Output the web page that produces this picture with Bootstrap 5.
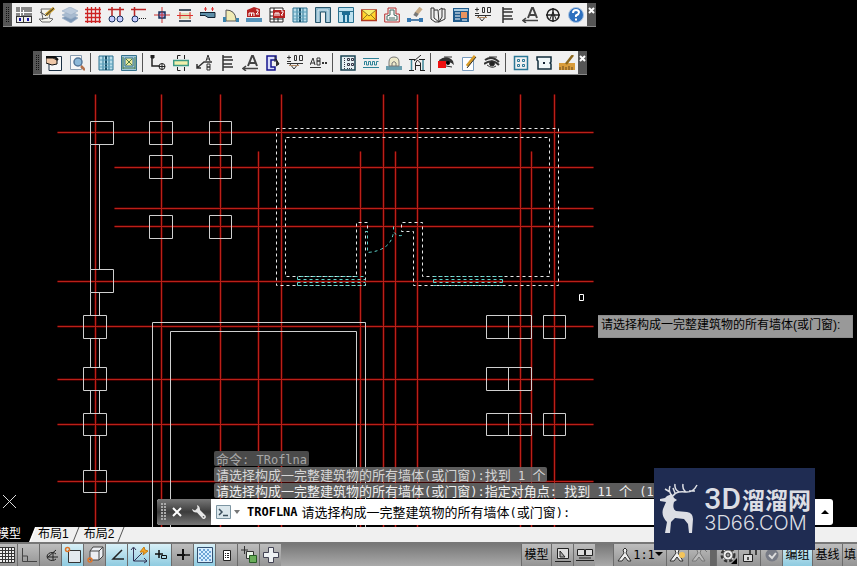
<!DOCTYPE html>
<html lang="zh-CN">
<head>
<meta charset="utf-8">
<meta name="viewport" content="width=device-width, initial-scale=1">
<title>CAD</title>
<link href="https://cdn.jsdelivr.net/npm/bootstrap@5.3.0/dist/css/bootstrap.min.css" rel="stylesheet">
<style>
body{background:#000;font-family:"Liberation Sans","Noto Sans CJK SC",sans-serif;font-size:12px;line-height:16px;color:#000}
button{border:0;padding:0;background:none;color:inherit;font:inherit}
svg{display:block;flex:none}
.plan{position:absolute;left:0;top:0}
.toolstrip{position:absolute;height:24px;background:#f0f0f0;border-bottom:1px solid #8a8a8a;overflow:hidden}
.strip-a{left:3px;top:3px}
.strip-b{left:33px;top:51px}
.strip-grip{width:9px;background:#555;color:#111}
.tool{width:23px;display:flex;align-items:center;justify-content:center}
.strip-sep{width:1px;background:#555;margin:2px 3px 2px 2px}
.strip-close{width:9px;background:#555;color:#fff}
.hint{position:absolute;left:598px;top:315px;background:#999;padding:1px 12px 4px 3px;border:1px solid #8c8c8c;border-left:0}
.history{position:absolute;left:214px;bottom:29px;font:13px/15px "Noto Sans CJK SC",sans-serif;gap:1px;color:#eee}
.history div{height:15px;background:rgba(105,105,105,.88);padding:0 2px;border-radius:2px;white-space:pre}
.history .past{background:#4a4a4a;color:#a6a6a6}
.history .recent{color:#d6d6d6}
.mono{font-family:"DejaVu Sans Mono",monospace;font-size:12px;line-height:12px}
.cmd{position:absolute;left:157px;right:24px;bottom:2px;height:26px;background:#fff;border-radius:3px;overflow:hidden;font:13px/18px "Noto Sans CJK SC",sans-serif}
.cmd-tools{width:54px;background:linear-gradient(#777,#3c3c3c 50%,#777)}
.cmd-name{font-weight:700}
.stage{z-index:1}
.brand{position:absolute;left:654px;bottom:-23px;width:161px;height:82px;background:#1f2c52;color:#dcdee4;padding:0 4px 0 6px}
.brand-cn{font:700 23px/28px "Noto Sans CJK SC",sans-serif;gap:1px}
.brand-num{font:500 30px/28px Roboto,sans-serif}
.brand-en{font:300 20px/20px Inter,"DejaVu Sans",sans-serif}
.sheets{height:17px;background:#f0f0f0;border-bottom:2px solid #777}
.sheets button{font-size:12px;line-height:15px}
.sheet-on{background:#000;color:#fff;width:28px;text-align:left}
.sheet-on span{margin-left:-3px}
.sheet{padding:0 2px}
.status{height:22px;background:linear-gradient(#777,#aaa);overflow:hidden}
.st{min-width:22px;border-left:1px solid #6c6c6c;background:linear-gradient(#bdbdbd,#949494);display:flex;align-items:center;justify-content:center;white-space:nowrap}
.st-on{background:linear-gradient(#d8f0f7,#8fcbe0)}
.st-word{width:30px}
.st-last{min-width:15px}
.st-scale{width:53px}
.left-group{margin-left:-5px}
.st-gap{width:18px}
.st-slit{width:6px;background:#666}
</style>
<script src="https://cdn.jsdelivr.net/npm/bootstrap@5.3.0/dist/js/bootstrap.bundle.min.js"></script>
</head>
<body class="d-flex flex-column vh-100 overflow-hidden">
<main class="stage flex-grow-1 position-relative">
<div class="position-absolute top-0 start-0 w-100 h-100 overflow-hidden">
<svg class="plan" width="857" height="527" fill="none" aria-label="建筑平面图">
<defs><path id="axes" d="M95 94V527M161 94V527M220 94V527M258 151V527M281 94V527M360 151V527M383 94V527M395 151V527M417 94V527M520 94V527M531 151V527M554 94V527M57 132H593M114 167H593M114 208H593M114 226H593M57 281H593M57 326H593M57 379H593M57 424H593M57 481H593"/></defs>
<g transform="translate(.5 .5)">
<use href="#axes" stroke="#3a0000" stroke-width="3"/>
<use href="#axes" stroke="#bb2018"/>
</g>
<g stroke="#cfcfcf" transform="translate(.5 .5)">
<path d="M90 121h23v23h-23zM149 121h23v23h-23zM209 121h22v23h-22zM149 155h23v23h-23zM209 155h22v23h-22zM149 215h23v23h-23zM209 215h22v23h-22zM90 269h23v23h-23z"/>
<path d="M83 315h23v23h-23zM83 367h23v23h-23zM83 413h23v22h-23zM83 470h23v22h-23z"/>
<path d="M90 144V269M99 144V269M90 292V315M99 292V315M90 338V367M99 338V367M90 390V413M99 390V413M90 435V470M99 435V470"/>
<path d="M152 527V322H365V527M170 527V331H356V527"/>
<path d="M486 315h45v23h-45zM508 315v23M486 367h45v23h-45zM508 367v23M486 413h45v22h-45zM508 413v22M543 315h22v23h-22zM543 413h22v22h-22z"/>
<path stroke="#fff" d="M579 294h4v6h-4z"/>
</g>
<g stroke="#e8e8e8" stroke-dasharray="3 3" transform="translate(.5 .5)">
<path d="M276 128H558V285H413V231H401V222H422V276H549V137H285V276H356V222H367V231H365V285H276V128"/>
</g>
<g stroke="#5fd4cc" stroke-dasharray="3 3" transform="translate(.5 .5)">
<path d="M297 285V276H365M297 279H365M297 282H365M297 285H365M433 276H502V285H433zM433 279H502M433 282H502"/>
<path d="M365 231H367V252Q391 250 393 231M393 226V231Q396 236 401 235V231"/>
</g>
<path stroke="#ddd" d="M3 495l13 13M16 495l-13 13"/>
</svg>
</div>

<div class="toolstrip strip-a d-flex" role="toolbar" aria-label="工具栏 1">
<div class="strip-grip"><svg width="9" height="24" stroke="#111" stroke-dasharray="1 1"><path d="M3.500 4V20M5.500 4V20"/></svg></div>
<button class="tool" aria-label="参数"><svg width="16" height="16" shape-rendering="crispEdges"><path fill="#888" d="M0 0h16v9H0z"/><path stroke="#fff" d="M0 5.500h16M4.500 0v9M7.500 3v5"/><path fill="#eee" stroke="#333" d="M.5 9.500h7v6h-7zM7.500 9.500h8v6h-8z"/><path fill="#11a" d="M3 11h2v3H3zM11 11h2v3h-2z"/></svg></button>
<button class="tool" aria-label="编辑"><svg width="16" height="16"><path fill="#f5f5ee" stroke="#666" d="M2 2h10l-2 9 4 1-3 3H3l-3-3h4z"/><path stroke="#555" d="M1 5l5 3M3 12l6-1"/><path stroke="#c69a25" stroke-width="3" d="M15 1L7 8"/><path stroke="#333" d="M15 1L6 9"/></svg></button>
<button class="tool" aria-label="图层"><svg width="16" height="16" stroke="#9db0c6" stroke-width=".7"><path fill="#7f9ab8" d="M0 11l8-4 8 4-7 5z"/><path fill="#a8bbd0" d="M0 8l8-4 8 4-7 4z"/><path fill="#bccbdc" d="M0 4l8-4 8 4-7 4z"/></svg></button>
<button class="tool" aria-label="轴网"><svg width="16" height="16" stroke="#c22" stroke-width="1.300"><path d="M0 2.500h16M0 6.500h16M0 10.500h16M0 14.500h16M2.500 0v16M6.500 0v16M10.500 0v16M14.500 0v16"/></svg></button>
<button class="tool" aria-label="两点轴标"><svg width="16" height="16" fill="#c6ccff"><path stroke="#b22" stroke-width="1.500" d="M0 2.500h16M4 0v9M12 0v9"/><g stroke="#17305c"><circle cx="4" cy="12" r="3"/><circle cx="12" cy="12" r="3"/></g></svg></button>
<button class="tool" aria-label="逐点轴标"><svg width="16" height="16" fill="#c6ccff"><path stroke="#b22" stroke-width="1.500" d="M0 2.500h15M3.500 0v9"/><circle cx="4" cy="12" r="3" stroke="#17305c"/><path stroke="#222" stroke-dasharray="1 1" d="M8 11.500h8"/></svg></button>
<button class="tool" aria-label="标准柱"><svg width="16" height="16"><path stroke="#c33" d="M0 8h16M8 0v16"/><path fill="#9da4e4" stroke="#17305c" stroke-width="1.500" d="M5 5h6v6H5z"/><path stroke="#c33" d="M5 8h6M8 5v6"/></svg></button>
<button class="tool" aria-label="墙体"><svg width="16" height="16"><path fill="#e3dfb8" d="M2 6h12v6H2z"/><path stroke="#123" stroke-width="1.500" d="M2 3h12M2 14h12"/><path stroke="#d33" d="M0 8.500h16M3 5v7M13 5v7"/></svg></button>
<button class="tool" aria-label="墙齐"><svg width="16" height="16"><path fill="#5e8fa8" stroke="#123" d="M0 5.500h15v5H8l-3-2H0z"/><path stroke="#d33" d="M5.500 0v4M12.500 0v4M4 2h3M11 2h3"/></svg></button>
<button class="tool" aria-label="门窗"><svg width="16" height="16"><path fill="#f0ebb4" stroke="#555" d="M3 14V3q9 0 10 9v2z"/><path fill="#3b84ad" d="M0 10h3v5H0zM13 11h3v4h-3z"/></svg></button>
<button class="tool" aria-label="面积"><svg width="16" height="16"><path fill="#b52222" d="M1 3l7-3 6 2v8H1z"/><path stroke="#fff" fill="none" d="M3 9V6h5v3M5.500 6v3M10 3h2v2l-2 2h3"/><path fill="#5793ba" d="M0 11h16v4H0z"/></svg></button>
<button class="tool" aria-label="面积表"><svg width="16" height="16"><path fill="#fff" stroke="#222" d="M1 1h13v14H1zM5 1v14M9 8v7M1 5h13M1 9h13M1 12h13"/><path fill="#b52222" d="M4 3h12v8H4z"/><path stroke="#fff" fill="none" d="M6 9V6h4v3M8 6v3M12 4h2v2l-2 2h2"/></svg></button>
<button class="tool" aria-label="门窗组"><svg width="16" height="16"><path fill="#b8ddea" stroke="#2a718f" d="M1 1h14v14H1zM5 1v14M11 1v14"/><path stroke="#174d66" stroke-width="2" d="M8 1v14"/><path stroke="#5ba0bb" d="M1 5h14M1 9h14M1 12h14"/></svg></button>
<button class="tool" aria-label="梯段"><svg width="16" height="16" fill="none"><path fill="#8cb7cc" stroke="#28566c" d="M.5 15.500V.5h15v15h-5V5h-5v10.500z"/><path stroke="#d8e9f0" d="M3 3v12M13 3v12M3 3h10"/></svg></button>
<button class="tool" aria-label="电梯"><svg width="16" height="16"><path fill="#bde1ef" stroke="#2a718f" d="M.5.500h15v15H.5zM.5 4.500h15"/><path fill="#1d6d94" d="M4 5h8v3h-1v7H9V8H7v7H5V8H4z"/></svg></button>
<button class="tool" aria-label="房间"><svg width="16" height="16"><path fill="#ffd72e" stroke="#b33b22" stroke-width="1.500" d="M.7 3h14.600v10.500H.7z"/><path fill="#f6ef70" stroke="#947422" d="M1 3l7 6 7-6M1 13l5-5M15 13l-5-5"/></svg></button>
<button class="tool" aria-label="洁具"><svg width="16" height="16"><path fill="#eee" stroke="#b33" d="M.7 7H4V1h8v6h3.300v8H.7z"/><path fill="#f8f8f8" stroke="#456b62" d="M3 13V9l3-1V3h4v5l3 1v4zM5 11h6"/></svg></button>
<button class="tool" aria-label="擦除"><svg width="16" height="16"><path stroke="#1f5d95" stroke-width="1.500" d="M0 13h16"/><path fill="#3779b2" d="M0 11h4v4H0zM12 11h4v4h-4z"/><path stroke="#c8ac88" stroke-width="4" d="M14 1L9 7"/><path stroke="#777" stroke-width="4" d="M10 6L8 9"/></svg></button>
<button class="tool" aria-label="图集"><svg width="16" height="16" fill="#eee" stroke="#333"><path d="M1 1h3v10l5 4H5l-4-3zM4 3h4l1 12M9 3l3-2v9l-3 5M12 2h3v10l-6 3"/></svg></button>
<button class="tool" aria-label="图块"><svg width="16" height="16"><path fill="#205b8c" d="M0 1h16v14H0z"/><path stroke="#fff" d="M2 6h5M2 9h5M2 12h5M9 13h5"/><path fill="#e8935f" d="M8 5h6v6H8z"/><path fill="#a9cde2" d="M1 2h14v2H1z"/></svg></button>
<button class="tool" aria-label="标高"><svg width="17" height="16" fill="none" stroke="#333"><path d="M0 2.500h4M2 .5v4M0 6.500h4M7.500.500h2v5h-2zM12.500.500h3v5h-3zM0 8.500h16M3 9l4 5 4-5"/><path stroke="#b28b66" d="M2 10.500h10"/></svg></button>
<button class="tool" aria-label="引注"><svg width="16" height="16" stroke="#333" stroke-width="1.500"><path d="M4 0v16M4 2h9M4 5h10M4 9h9M4 12h10"/></svg></button>
<button class="tool" aria-label="箭头"><svg width="16" height="16" fill="none" stroke="#444"><path stroke-width="2" d="M6 11L10 1h1l4 10M8 8h6"/><path stroke-width="1.500" d="M16 13.500H1M4 11l-3 2.500L4 16"/></svg></button>
<button class="tool" aria-label="指北针"><svg width="16" height="16" fill="none" stroke="#222"><circle cx="8" cy="8" r="6" stroke-width="1.500"/><path stroke-width="1.500" d="M1 8h14M8 1v14"/><path d="M5 12l3-7 3 7"/></svg></button>
<button class="tool" aria-label="帮助"><svg width="16" height="16"><circle cx="8" cy="8" r="7.500" fill="#2d70bf" stroke="#adc6e2"/><path fill="none" stroke="#fff" stroke-width="2" d="M5 6q0-3 3-3t3 2.500q0 1.500-3 3V10M8 11.500v2"/></svg></button>
<button class="strip-close d-flex justify-content-center" aria-label="关闭"><svg width="7" height="12" stroke="#fff" stroke-width="2"><path d="M1 5l5 5M6 5l-5 5"/></svg></button>
</div>

<div class="toolstrip strip-b d-flex" role="toolbar" aria-label="工具栏 2">
<div class="strip-grip"><svg width="9" height="24" stroke="#111" stroke-dasharray="1 1"><path d="M3.500 4V20M5.500 4V20"/></svg></div>
<button class="tool" aria-label="属性"><svg width="16" height="16"><path fill="#f8f8f8" stroke="#1c3144" d="M3 1.500h12.500v14H3z"/><path fill="#f0c8a8" stroke="#111" d="M0 3h7l4 2v4l-5 1-6-2z"/><path stroke="#111" stroke-width="2" fill="none" d="M0 2h9l3 3"/></svg></button>
<button class="tool" aria-label="查找"><svg width="16" height="16"><path fill="#f8f8f8" stroke="#8a9db0" d="M1.500.500h11v14h-11z"/><circle cx="9" cy="7" r="4" fill="#8db9d9" stroke="#55779a" stroke-width="1.500"/><path stroke="#b5704a" stroke-width="2.500" d="M12 11l4 4"/></svg></button>
<div class="strip-sep"></div>
<button class="tool" aria-label="门窗组"><svg width="16" height="16"><path fill="#b8ddea" stroke="#2a718f" d="M1 1h14v14H1zM5 1v14M11 1v14"/><path stroke="#174d66" stroke-width="2" d="M8 1v14"/><path stroke="#5ba0bb" d="M1 5h14M1 9h14M1 12h14"/></svg></button>
<button class="tool" aria-label="图框"><svg width="16" height="16"><path fill="#9fc7da" stroke="#35718c" d="M.5.500h15v15H.5z"/><path fill="#ece99a" stroke="#35718c" d="M4 3h8v8H4z"/><path stroke="#4b7b48" d="M5 4l6 6M11 4l-6 6M2 13h12M2 2v12M14 2v12"/></svg></button>
<div class="strip-sep"></div>
<button class="tool" aria-label="轴改"><svg width="16" height="16" fill="none" stroke="#222"><path stroke-width="1.500" d="M2 1v10h7"/><circle cx="12" cy="11.500" r="3"/><path d="M9 11.500h6M12 8.500v6"/><path fill="#222" d="M1 0h3v3H1z"/></svg></button>
<button class="tool" aria-label="剖切"><svg width="16" height="16"><path fill="#f1efab" stroke="#3d9a86" stroke-width="1.500" d="M.7 5.500h14.600v5H.7z"/><path stroke="#222" fill="none" d="M4.500 4V.5h3M11.500 0v4M4.500 12v3.500h3M11.500 12v4"/></svg></button>
<button class="tool" aria-label="索引"><svg width="16" height="16" fill="none" stroke="#333"><path stroke-width="1.500" d="M1 13l7-6h8M1 9v4h4"/><path d="M10 6l2-6 2 6M11 4h3M11 9h3v3h-3zM11 12h3v3h-3z"/></svg></button>
<button class="tool" aria-label="引注"><svg width="16" height="16" stroke="#333" stroke-width="1.500"><path d="M4 0v16M4 2h9M4 5h10M4 9h9M4 12h10"/></svg></button>
<button class="tool" aria-label="箭头"><svg width="16" height="16" fill="none" stroke="#444"><path stroke-width="2" d="M6 11L10 1h1l4 10M8 8h6"/><path stroke-width="1.500" d="M16 13.500H1M4 11l-3 2.500L4 16"/></svg></button>
<button class="tool" aria-label="轮廓"><svg width="16" height="16" fill="#d9ddfa" stroke="#15158d"><path stroke-width="1.500" d="M11 1H2v14h8v-3H6V5h5z"/><path fill="#333" stroke="#222" d="M11 4l3 5-3 2M10 1v6"/></svg></button>
<button class="tool" aria-label="标高"><svg width="17" height="16" fill="none" stroke="#333"><path d="M0 2.500h4M2 .5v4M0 6.500h4M7.500.500h2v5h-2zM12.500.500h3v5h-3zM0 8.500h16M3 9l4 5 4-5"/><path stroke="#b28b66" d="M2 10.500h10"/></svg></button>
<button class="tool" aria-label="文字"><svg width="17" height="16" fill="none" stroke="#333"><path d="M0 10l3-7 2 7M1 8h4M7 3h3v3H7zM7 6h3v4H7zM0 12.500h11"/><path stroke-width="2" d="M12 8h2M15 8h2"/></svg></button>
<div class="strip-sep"></div>
<button class="tool" aria-label="总图"><svg width="16" height="16"><path fill="#e6f0f3" stroke="#1a4353" stroke-width="1.500" d="M1 1h14v14H1z"/><path fill="none" stroke="#334" d="M7.500 3.500h2v2h-2zM11.500 3.500h2v2h-2zM7.500 8.500h2v2h-2zM11.500 8.500h2v2h-2z"/><path stroke="#334" stroke-dasharray="1 1" d="M4.500 3v11M7 13.500h6"/></svg></button>
<button class="tool" aria-label="保温"><svg width="16" height="16" fill="none" stroke="#2f8297"><path d="M0 3.500h16M0 12.500h16"/><path d="M1.500 10V6.500h2V10h2V6.500h2V10h2V6.500h2V10h2V6.500h2"/></svg></button>
<button class="tool" aria-label="拱"><svg width="16" height="16"><path fill="#6b9eae" d="M0 11h16v4H0z"/><path fill="#eeeacb" stroke="#777" d="M3 11V7q0-5 5-5t5 5v4zM6 11V8q2-3 4 0v3"/></svg></button>
<button class="tool" aria-label="房屋"><svg width="16" height="16" fill="none" stroke="#222"><path d="M0 4.500h6M10 4.500h6M12 0L5 6M6.500 15V8l2-3 3 3v7M7 10.500h4M0 15.500h5M11 15.500h5"/><path stroke="#3f8798" stroke-width="1.500" d="M2.500 5v10M14 5v10"/></svg></button>
<div class="strip-sep"></div>
<button class="tool" aria-label="局部隐藏"><svg width="16" height="16"><path fill="#333" d="M1 5q8-6 14 1l1 4q-4-4-7-2t-7-1z"/><path stroke="#333" d="M6 2h8M5 4l-5 3M8 11l6 1"/><path fill="#e11" d="M0 6h8v7H0z"/><circle cx="10" cy="8" r="2"/></svg></button>
<button class="tool" aria-label="修改"><svg width="16" height="16"><path fill="#fff" stroke="#789bbd" d="M1.500 2.500h11v13h-11z"/><path stroke="#d79b27" stroke-width="3" d="M14 1L6 11"/><path stroke="#333" d="M15 2L6 13"/></svg></button>
<button class="tool" aria-label="恢复可见"><svg width="16" height="16" fill="none" stroke="#333"><path stroke-width="2" d="M1 5q7-5 14 2M0 9q8-6 15 1"/><path d="M3 10q5 4 9 1M5 2h8"/><circle cx="8" cy="8.500" r="2.500" fill="#222"/></svg></button>
<div class="strip-sep"></div>
<button class="tool" aria-label="图库"><svg width="16" height="16" fill="none" stroke="#2b7897"><path stroke-width="1.500" d="M1.500 1.500h13v13h-13z"/><path d="M4.500 4.500h2v2h-2zM9.500 4.500h2v2h-2zM4.500 9.500h2v2h-2zM9.500 9.500h2v2h-2z"/></svg></button>
<button class="tool" aria-label="视口"><svg width="16" height="16"><path fill="#eef6f8" stroke="#112c3b" stroke-width="1.500" d="M1 2h14v5l-1 1 1 1v5H2V6L1 5z"/><path fill="#123" d="M7 7h2v2H7z"/></svg></button>
<button class="tool" aria-label="标尺"><svg width="16" height="16"><path fill="#d99c3a" d="M0 8h16v7H0z"/><path stroke="#664519" d="M1 12v3M4 11v4M7 12v3M10 11v4M13 12v3"/><path stroke="#8b671d" stroke-width="2.500" d="M14 0L7 9"/></svg></button>
<button class="strip-close d-flex justify-content-center" aria-label="关闭"><svg width="7" height="12" stroke="#fff" stroke-width="2"><path d="M1 5l5 5M6 5l-5 5"/></svg></button>
</div>

<div class="hint">请选择构成一完整建筑物的所有墙体(或门窗):</div>

<div class="history d-flex flex-column align-items-start">
<div class="past">命令<span class="mono">: TRoflna</span></div>
<div class="recent">请选择构成一完整建筑物的所有墙体<span class="mono">(</span>或门窗<span class="mono">):</span>找到<span class="mono"> 1 </span>个</div>
<div>请选择构成一完整建筑物的所有墙体<span class="mono">(</span>或门窗<span class="mono">):</span>指定对角点<span class="mono">: </span>找到<span class="mono"> 11 </span>个<span class="mono"> (1</span></div>
</div>

<div class="cmd d-flex align-items-stretch">
<div class="cmd-tools d-flex align-items-center">
<svg width="10" height="20" class="ms-1" stroke="#aaa" stroke-width="2" stroke-dasharray="2 1"><path d="M1 1v18M4 1v18"/></svg>
<button aria-label="关闭"><svg width="12" height="12" stroke="#fff" stroke-width="2"><path d="M2 2l8 8M10 2l-8 8"/></svg></button>
<button class="ms-2" aria-label="自定义"><svg width="16" height="16"><path fill="#e6e6e6" d="M6 1q3 1 3 5l5.500 5.500q1 2-.5 3t-2.500 0L6 8.500Q2 9 1 5l3 1.500L6.500 4z"/><circle cx="12.500" cy="12.700" r=".8" fill="#555"/></svg></button>
</div>
<button class="ms-1 d-flex align-items-center" aria-label="最近命令"><svg width="28" height="16"><path fill="#dbe7ec" stroke="#7d95a2" d="M1.500 1.500h14v13h-14z"/><path fill="none" stroke="#3b4f5c" stroke-width="1.500" d="M4 5l3 3-3 3M8 11.500h5"/><path fill="#777" d="M19 6h6l-3 4z"/></svg></button>
<label class="d-flex align-items-center flex-grow-1 text-nowrap gap-1 ps-1" for="cmdmore"><span class="mono cmd-name">TROFLNA</span><span>请选择构成一完整建筑物的所有墙体<span class="mono">(</span>或门窗<span class="mono">):</span></span></label>
<button id="cmdmore" class="px-1" aria-label="展开历史"><svg width="8" height="6"><path d="M0 5l4-4 4 4z"/></svg></button>
</div>

<div class="brand d-flex align-items-center justify-content-between">
<svg width="38" height="52" viewBox="0 0 38 52" fill="#dcdee4"><path d="M7 13l5-2 2 4 3 2-3 2q-2 7 2 9l11 1q6 1 6 7l-1 14h-3l-1-9-4-5-9-1-4 4-1 11H5l2-11Q1 33 3 26l3-7-6-1v-2l5-1z"/><path fill="none" stroke="#dcdee4" stroke-width="1.500" d="M12 13Q8 8 10 3M10 9L5 6M13 13q3-5 12-4 8 1 12-7M19 9q-5-3-4-8M26 9q-4-3-3-8M15 10l-2-5M29 8l6 0"/></svg>
<div><div class="brand-cn d-flex text-nowrap"><span class="brand-num">3D</span><span>溜溜网</span></div><div class="brand-en">3D66.COM</div></div>
</div>
</main>
<nav class="sheets d-flex" aria-label="布局">
<button class="sheet-on overflow-hidden text-nowrap"><span>模型</span></button>
<svg width="8" height="15"><path d="M0 0h7L1 15H0z"/><path stroke="#fff" d="M8 0L2 15"/></svg>
<button class="sheet">布局1</button>
<svg width="9" height="15" stroke="#555"><path d="M8 0L2 15"/></svg>
<button class="sheet ps-1">布局2</button>
<svg width="9" height="15" stroke="#555"><path d="M8 0L2 15"/></svg>
</nav>
<footer class="status d-flex align-items-stretch">
<div class="left-group d-flex">
<button class="st" aria-label="栅格"><svg width="18" height="16" stroke="#333"><path fill="#eee" d="M1.500.500h15v15h-15zM4.500 0v16M7.500 0v16M10.500 0v16M13.500 0v16M1 3.500h16M1 6.500h16M1 9.500h16M1 12.500h16"/></svg></button>
<button class="st" aria-label="正交"><svg width="18" height="16" fill="none" stroke="#444"><path d="M2.500 1v13.500H17M2.500 9h5v5"/></svg></button>
<button class="st" aria-label="极轴"><svg width="16" height="16" fill="none" stroke="#222"><path d="M13 7a5 4 0 1 0 0 5M4 10h11M5 10l8-7M10 6v7"/></svg></button>
<button class="st st-on" aria-label="对象捕捉"><svg width="18" height="18"><path fill="#e3e9ee" stroke="#333" d="M4.500 4.500h12v12h-12z"/><circle cx="3.500" cy="3.500" r="2" fill="none" stroke="#e07528" stroke-width="1.500"/></svg></button>
<button class="st" aria-label="三维捕捉"><svg width="18" height="18"><path fill="#eceef2" stroke="#444" d="M4 5l3-4h10v9l-4 4H4zM4 5h9v9M13 5l4-4"/><circle cx="4" cy="14" r="2" fill="none" stroke="#e07528" stroke-width="1.500"/></svg></button>
<button class="st st-on" aria-label="对象追踪"><svg width="16" height="16" fill="none" stroke="#222" stroke-width="1.500"><path d="M13 3L4 12h11"/></svg></button>
<button class="st st-on" aria-label="动态坐标"><svg width="18" height="18" fill="none" stroke="#335"><path d="M3.500 2v13H17M1 4l2.500-3L6 4M14 12l3 3-3 2M4 15l8-8"/><path fill="#f6a521" stroke="#c47b15" d="M10 6l4-5 1 3 3 1-5 4 1-3z"/></svg></button>
<button class="st st-on" aria-label="动态输入"><svg width="16" height="16" fill="none" stroke="#111"><path stroke-width="1.500" d="M2 7h8M6 3v8"/><path d="M8.500 8.500h5v3h-5z"/></svg></button>
<button class="st" aria-label="线宽"><svg width="16" height="16" stroke="#111"><path stroke-width="2" d="M2 8h8M8 2v11"/><path stroke-width="1.500" d="M9 8h6"/></svg></button>
<button class="st st-on" aria-label="透明度"><svg width="18" height="18"><path fill="#d8efff" stroke="#334f70" d="M1.500 1.500h15v15h-15z"/><path stroke="#6ea4d6" stroke-width="2" stroke-dasharray="2 2" d="M3 4h12M5 6h10M3 8h12M5 10h10M3 12h12M5 14h10"/></svg></button>
<button class="st" aria-label="快捷特性"><svg width="14" height="16"><path fill="#fff" stroke="#222" d="M3.500 3.500h7v10h-7z"/><path stroke="#222" d="M5 6.500h1M7 6.500h2M5 8.500h1M7 8.500h2M5 10.500h1M7 10.500h2"/></svg></button>
<button class="st" aria-label="选择循环"><svg width="18" height="18"><path stroke="#333" d="M1 4h7M4.500 0v8"/><path fill="#eaf4e8" stroke="#333" d="M6.500 5.500h7v7h-7z"/><path fill="#69ad59" stroke="#275c25" d="M9.500 9.500h7v7h-7z"/></svg></button>
<button class="st" aria-label="注释监视器"><svg width="18" height="18"><path fill="#eef1f3" stroke="#445" d="M6.500 1.500h5v5h5v5h-5v5h-5v-5h-5v-5h5z"/></svg></button>
</div>
<div class="d-flex ms-auto">
<button class="st st-word">模型</button>
<button class="st" aria-label="布局"><svg width="16" height="16" fill="#ddd" stroke="#222"><path d="M2.500 1.500h11v10h-11zM5 4v6h5zM0 14.500h16"/></svg></button>
<button class="st" aria-label="快速查看图形"><svg width="18" height="16" fill="#ddd" stroke="#222"><path d="M1.500 2.500h7v6h-7zM9.500 2.500h7v6h-7zM0 13.500h18M3 11h12"/></svg></button>
<div class="st-gap"></div>
<button class="st st-scale" aria-label="注释比例 1:1"><svg width="16" height="16" fill="#eee" stroke="#333"><path d="M8 1l2 2-1 3 5 8h-3l-3-4-3 4H1l6-8-1-3z"/></svg><span class="mono">1:1</span><svg width="8" height="16"><path d="M0 5h8L4 9z"/></svg></button>
<button class="st" aria-label="注释可见性"><svg width="18" height="16"><path fill="#eee" stroke="#333" d="M8 1l2 2-1 3 5 8h-3l-3-4-3 4H1l6-8-1-3z"/><circle cx="13" cy="8" r="3" fill="#f5c55a"/></svg></button>
<button class="st" aria-label="自动缩放"><svg width="18" height="16" fill="#bbb" stroke="#777"><path d="M8 1l2 2-1 3 5 8h-3l-3-4-3 4H1l6-8-1-3zM12 1l4 4"/></svg></button>
<div class="st-slit"></div>
<button class="st" aria-label="切换工作空间"><svg width="18" height="18"><circle cx="9" cy="9" r="6" fill="#eee" stroke="#333" stroke-width="3" stroke-dasharray="3 2"/><circle cx="9" cy="9" r="5" fill="#eee" stroke="#555"/><circle cx="9" cy="9" r="2" fill="#999" stroke="#333"/><path d="M18 12v6h-6z"/></svg></button>
<button class="st" aria-label="锁定"><svg width="18" height="18" fill="none" stroke="#222"><path fill="#ddd" d="M2.500 8.500h9v7h-9z"/><path stroke-width="1.500" d="M9 8V4q3-4 6 0v5M7 11v3"/></svg></button>
<button class="st" aria-label="硬件加速"><svg width="16" height="16"><circle cx="8" cy="8" r="6.500" fill="#777b86"/><path stroke="#ddd" stroke-width="2" fill="none" d="M5 8l3 3 4-5"/></svg></button>
<button class="st st-word st-on">编组</button>
<button class="st st-word">基线</button>
<button class="st st-last">填</button>
</div>
</footer>
</body>
</html>
